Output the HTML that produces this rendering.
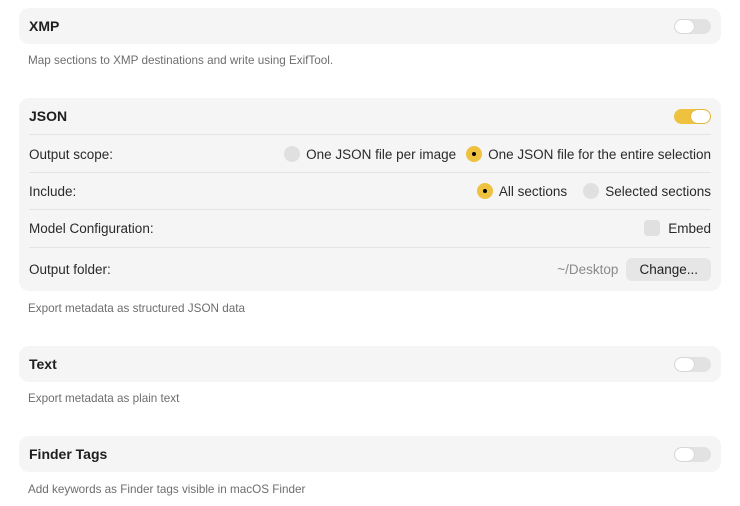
<!DOCTYPE html>
<html><head><style>
*{box-sizing:border-box;margin:0;padding:0}
body{width:740px;height:506px;background:#fff;font-family:"Liberation Sans",sans-serif;color:#222;position:relative;overflow:hidden}
.card{position:absolute;left:19px;width:702px;background:#f5f5f5;border-radius:10px}
.hdr{height:36px;display:flex;align-items:center;padding:0 10px;font-weight:bold;font-size:14px;color:#1e1e1e}
.row{position:absolute;left:10px;right:10px;display:flex;align-items:center;font-size:13.5px;color:#2a2a2a}
.row .r{margin-left:auto;display:flex;align-items:center}
.sep{position:absolute;left:10px;right:10px;height:1px;background:#e4e4e4}
.tg{position:absolute;right:10px;width:37px;height:15px;border-radius:8px;background:#e2e2e2}
.tg::after{content:"";position:absolute;left:1px;top:1px;width:19px;height:13px;border-radius:7px;background:#fff;box-shadow:0 0 1px rgba(0,0,0,.3)}
.tg.on{background:#eec13e}
.tg.on::after{left:17px}
.desc{position:absolute;left:28px;font-size:11.7px;color:#6e6e6e}
.rd{width:16px;height:16px;border-radius:50%;background:#e0e0e0;display:inline-block;margin-right:6px;position:relative}
.rd.on{background:#eec13e}
.rd.on::after{content:"";position:absolute;left:6px;top:6px;width:4px;height:4px;border-radius:50%;background:#000}
.cb{width:16px;height:16px;border-radius:4px;background:#e0e0e0;display:inline-block;margin-right:8px}
.btn{background:#e6e6e6;border-radius:6px;padding:0 13px;height:23px;line-height:23px;font-size:13.5px;color:#222}
</style></head><body>
<div class="card" style="top:8px;height:36px"><div class="hdr">XMP</div><div class="tg" style="top:11px"></div></div>
<div class="desc" style="top:54px">Map sections to XMP destinations and write using ExifTool.</div>

<div class="card" style="top:98px;height:193px">
<div class="hdr">JSON</div><div class="tg on" style="top:11px"></div>
<div class="sep" style="top:36px"></div>
<div class="row" style="top:46px;height:20px">Output scope:<span class="r"><span class="rd"></span>One JSON file per image<span style="width:10px"></span><span class="rd on"></span>One JSON file for the entire selection</span></div>
<div class="sep" style="top:74px"></div>
<div class="row" style="top:83px;height:20px">Include:<span class="r"><span class="rd on"></span>All sections<span style="width:16px"></span><span class="rd"></span>Selected sections</span></div>
<div class="sep" style="top:111px"></div>
<div class="row" style="top:120px;height:20px">Model Configuration:<span class="r"><span class="cb"></span>Embed</span></div>
<div class="sep" style="top:149px"></div>
<div class="row" style="top:160px;height:23px">Output folder:<span class="r"><span style="color:#8a8a8a;margin-right:8px">~/Desktop</span><span class="btn">Change...</span></span></div>
</div>
<div class="desc" style="top:302px">Export metadata as structured JSON data</div>

<div class="card" style="top:346px;height:36px"><div class="hdr">Text</div><div class="tg" style="top:11px"></div></div>
<div class="desc" style="top:392px">Export metadata as plain text</div>

<div class="card" style="top:436px;height:36px"><div class="hdr">Finder Tags</div><div class="tg" style="top:11px"></div></div>
<div class="desc" style="top:483px">Add keywords as Finder tags visible in macOS Finder</div>
</body></html>
